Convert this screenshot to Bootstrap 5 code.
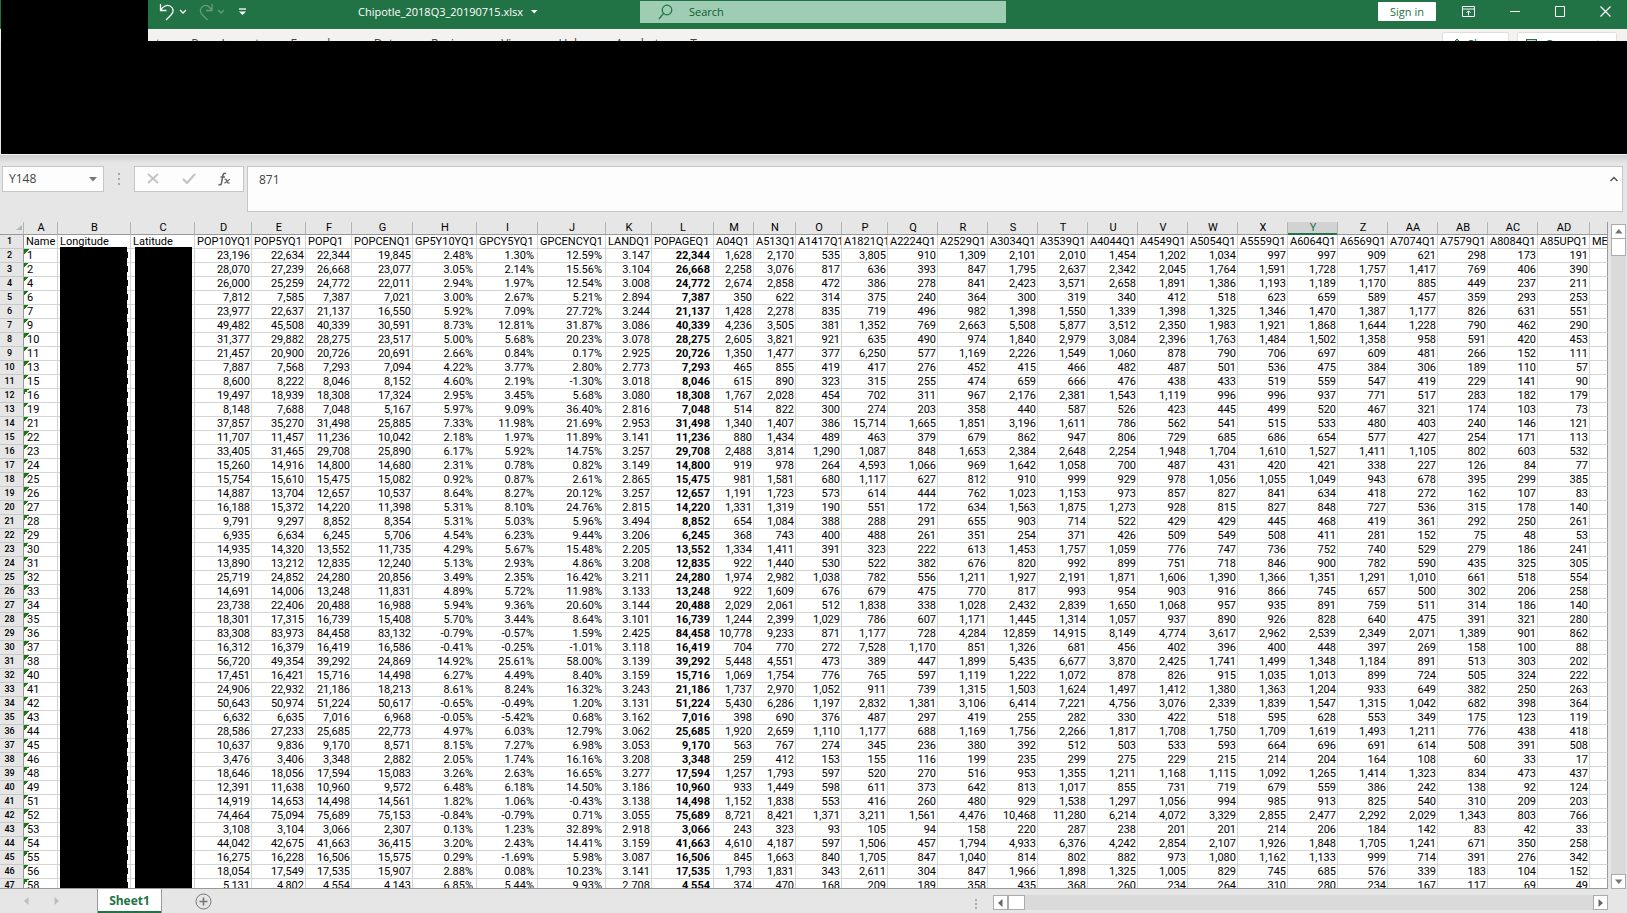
<!DOCTYPE html>
<html lang="en">
<head>
<meta charset="utf-8">
<meta name="viewport" content="width=device-width, initial-scale=1">
<title>Chipotle_2018Q3_20190715.xlsx</title>
<link href="https://cdn.jsdelivr.net/npm/bootstrap@5.3.0/dist/css/bootstrap.min.css" rel="stylesheet">
<style>
  :root { --xl-green:#217346; --chrome:#e6e6e6; --line:#d4d4d4; --edge:#999; }
  body { font-family:"Open Sans","Noto Sans",sans-serif; font-size:11px; line-height:16px; background:var(--chrome); color:#000; }
  button { font:inherit; color:inherit; background:none; border:0; padding:0; }
  input, textarea { font:inherit; color:inherit; border:0; padding:0; background:none; outline:0; resize:none; }
  svg { display:block; }
  .title-bar { height:29px; background:var(--xl-green); color:#fff; }
  .title-inner { height:23px; }
  .quick-tools { width:358px; padding-left:159px; }
  .dimmed { opacity:.3; }
  .file-name { width:282px; }
  .search-box { width:366px; height:22px; background:#9fcdb3; color:#0e5c2f; padding-left:18px; margin-top:1px; }
  .search-box input::placeholder { color:#0e5c2f; opacity:1; }
  .sign-in { background:#fff; color:var(--xl-green); width:58px; height:19px; border-radius:1px; }
  .window-tools { padding-right:16px; gap:35px; }
  .sign-in { margin-right:-9px; }
  .ribbon-tabs { height:12px; background:#f3f2f1; color:#444; font-size:12px; padding-left:128px; padding-right:10px; gap:31px; }
  .ribbon-tabs a { color:#444; line-height:30px; white-space:nowrap; }
  .ribbon-btn { background:#fff; border:1px solid #e1dfdd; border-radius:2px; height:26px; margin-top:3px; color:var(--xl-green); }
  .share-btn { width:67px; }
  .comments-btn { width:100px; }
  .ribbon-body { height:113px; margin-left:1px; background:#000; }
  .mask { background:#000; }
  .mask-corner { left:1px; top:0; width:147px; height:60px; }
  .formula-row { height:68px; padding:12px 4px 0 2px; background:linear-gradient(#f4f4f4 0 1px,#cdcdcd 1px,#e6e6e6 9px); font-size:12px; color:#444; }
  .field { background:#fdfdfd; border:1px solid #c6c6c6; }
  .name-box { width:102px; height:26px; padding:1px 6px 0; }
  .name-box input { width:70px; }
  .grip { width:30px; height:26px; }
  .edit-tools { width:110px; height:26px; padding:0 12px; margin-right:3px; }
  .value-box { height:46px; padding:5px 4px 0 11px; }
  .sheet { min-height:0; }
  .cells { border-bottom:1px solid var(--edge); min-width:0; }
  .grid { table-layout:fixed; width:100%; border-collapse:separate; border-spacing:0; font-family:Roboto,"Liberation Sans",sans-serif; font-size:11px; line-height:13px; background:#fff; }
  .grid td, .grid th { padding:0 1px 0 2px; border-right:1px solid var(--line); border-bottom:1px solid var(--line); overflow:hidden; white-space:nowrap; text-align:right; font-weight:400; height:14px; }
  .grid thead th { background:var(--chrome); text-align:center; line-height:12px; height:13px; border-right-color:#b4b4b4; border-bottom-color:var(--edge); }
  .grid thead th.picked { background:#d2d2d2; color:var(--xl-green); box-shadow:inset 0 -1px var(--xl-green); border-bottom-color:var(--xl-green); }
  .grid tbody th { background:var(--chrome); text-align:center; font-size:9px; font-weight:500; border-right-color:var(--edge); border-bottom-color:#c9c9c9; padding:0 4px 0 0; }
  .grid td.txt { text-align:left; padding-right:0; }
  .grid td.pct { padding-right:3px; }
  .grid td.strong { font-weight:700; padding-right:3px; }
  .grid td.flagged { padding-left:3px; background:linear-gradient(135deg,#107c10 50%,transparent 50%) 0 0/5px 5px no-repeat; }
  .grid th:last-child, .grid td:last-child { border-right-color:var(--edge); }
  .mask-b, .mask-c { top:25px; bottom:0; }
  .mask-b { left:60px; width:67px; }
  .mask-c { left:135px; width:57px; }
  .mask-b::after { content:""; position:absolute; left:100%; top:0; bottom:0; width:1px; background:repeating-linear-gradient(transparent 0 5px,#000 5px 11px,transparent 11px 14px); }
  .v-scroll { width:15px; margin:2px 1px 0 3px; background:#dadada; }
  .sq { width:15px; height:15px; background:#fff; border:1px solid #ababab; display:flex; align-items:center; justify-content:center; flex:none; }
  .thumb-v { height:18px; width:15px; margin-top:-1px; background:#fff; border:1px solid #ababab; }
  .thumb-h { width:17px; height:15px; background:#fff; border:1px solid #ababab; }
  .foot { height:24px; padding-right:19px; }
  .sheet-nav { width:97px; padding-left:24px; gap:25px; }
  .sheet-tab { width:65px; background:#fff; color:var(--xl-green); font-size:12px; font-weight:700; border:solid var(--edge); border-width:0 1px; box-shadow:inset 0 -2px var(--xl-green); }
  .add-sheet { margin-left:33px; }
  .h-scroll { width:40%; max-width:633px; height:15px; margin-top:6px; }
  .h-track { height:15px; background:#dadada; }
</style>
</head>
<body>
<div class="d-flex flex-column vh-100 overflow-hidden position-relative">
  <header class="title-bar">
    <div class="title-inner d-flex align-items-center">
      <div class="quick-tools d-flex align-items-center flex-shrink-0">
        <button aria-label="Undo"><svg width="28" height="18" viewBox="0 0 28 18" fill="none" stroke="#fff" stroke-width="1.3"><path d="M1.5 1v6.500h6M1.500 7.500C4 3 8 1.500 11 3c4 2 4 6 1 9l-5 5"/><path d="M21 7l3 3 3-3"/></svg></button>
        <button class="dimmed ms-2 ps-1" aria-label="Redo"><svg width="28" height="18" viewBox="0 0 28 18" fill="none" stroke="#fff" stroke-width="1.300"><path d="M13 1v6.500H7M13 7.500C10 3 7 1.500 4.500 3c-4 2-4 6-1 9l5 5"/><path d="M19 7l3 3 3-3"/></svg></button>
        <button class="ms-2 ps-1" aria-label="Customize toolbar"><svg width="8" height="8" viewBox="0 0 8 8"><path d="M0 1h7" stroke="#fff" stroke-width="1.300"/><path d="M0 3.500h7l-3.500 3.500z" fill="#fff"/></svg></button>
      </div>
      <div class="file-name d-flex align-items-center gap-2 flex-shrink-0">
        <span>Chipotle_2018Q3_20190715.xlsx</span>
        <svg width="7" height="4" viewBox="0 0 7 4"><path d="M0 0h6.500L3.300 3.500z" fill="#fff"/></svg>
      </div>
      <label class="search-box d-flex align-items-center">
        <svg width="15" height="16" viewBox="0 0 15 16" fill="none" stroke="#217346" stroke-width="1.200"><circle cx="9" cy="6" r="4.800"/><path d="M5.500 9.500L1 15"/></svg>
        <input class="ms-3 flex-grow-1" type="search" placeholder="Search" aria-label="Search">
      </label>
      <div class="window-tools ms-auto d-flex align-items-center">
        <button class="sign-in">Sign in</button>
        <button aria-label="Ribbon display options"><svg width="13" height="11" viewBox="0 0 13 11" fill="none" stroke="#fff"><path d="M.5.500h12v10H.500zM.500 3h12M6.500 9.500V5M4.500 6.800l2-2 2 2"/></svg></button>
        <button aria-label="Minimize"><svg width="10" height="11" viewBox="0 0 10 11"><path d="M0 5.500h10" stroke="#fff"/></svg></button>
        <button aria-label="Maximize"><svg width="10" height="11" viewBox="0 0 10 11"><path d="M.5.500h9v10H.500z" fill="none" stroke="#fff"/></svg></button>
        <button aria-label="Close"><svg width="11" height="11" viewBox="0 0 11 11"><path d="M.500.500l10 10M10.500.500l-10 10" stroke="#fff" stroke-width="1.200"/></svg></button>
      </div>
    </div>
  </header>

  <nav class="ribbon-tabs d-flex align-items-start overflow-hidden flex-shrink-0">
    <a class="text-decoration-none" href="#">Insert</a>
    <a class="text-decoration-none" href="#">Page Layout</a>
    <a class="text-decoration-none" href="#">Formulas</a>
    <a class="text-decoration-none" href="#">Data</a>
    <a class="text-decoration-none" href="#">Review</a>
    <a class="text-decoration-none" href="#">View</a>
    <a class="text-decoration-none" href="#">Help</a>
    <a class="text-decoration-none" href="#">Acrobat</a>
    <a class="text-decoration-none" href="#">Team</a>
    <div class="ms-auto d-flex gap-2">
      <button class="ribbon-btn share-btn d-flex align-items-center justify-content-center gap-1"><svg width="12" height="14" viewBox="0 0 12 14" fill="none" stroke="#217346"><path d="M6 10V1M3.500 3.500L6 1l2.500 2.500M1 7v6.500h10V7"/></svg>Share</button>
      <button class="ribbon-btn comments-btn d-flex align-items-center gap-2 px-2"><svg width="11" height="12" viewBox="0 0 11 12" fill="none" stroke="#217346" stroke-width="1.300"><path d="M.500.700h10v7H5l-2.500 2.500V7.700h-2z"/></svg>Comments</button>
    </div>
  </nav>
  <div class="ribbon-body flex-shrink-0"></div>
  <div class="mask mask-corner position-absolute"></div>

  <div class="formula-row d-flex align-items-start flex-shrink-0">
    <div class="field name-box d-flex align-items-center justify-content-between">
      <input type="text" value="Y148" aria-label="Name box">
      <button aria-label="Name list"><svg width="8" height="5" viewBox="0 0 8 5"><path d="M0 0h8L4 4.500z" fill="#777"/></svg></button>
    </div>
    <div class="grip d-flex align-items-center justify-content-center"><svg width="2" height="12" viewBox="0 0 2 12" fill="#a8a8a8"><path d="M0 0h2v2H0zM0 5h2v2H0zM0 10h2v2H0z"/></svg></div>
    <div class="field edit-tools d-flex align-items-center justify-content-between">
      <button aria-label="Cancel"><svg width="12" height="11" viewBox="0 0 12 11"><path d="M1 1l10 9M11 1L1 10" stroke="#c3c3c3" stroke-width="1.800"/></svg></button>
      <button aria-label="Enter"><svg width="14" height="11" viewBox="0 0 14 11"><path d="M1 6l4 4L13 1" fill="none" stroke="#c3c3c3" stroke-width="2.200"/></svg></button>
      <button aria-label="Insert function"><svg width="13" height="14" viewBox="0 0 13 14" fill="none" stroke="#666" stroke-width="1.200"><path d="M8 1.500C6 .5 5.200 2 4.800 4L3.500 11c-.3 1.800-1.300 2.300-3 1.500M2.500 5h4.500" stroke-width="1.500"/><path d="M6.500 7.500c1.500-.8 2 .2 2.500 1.800s1 2.300 2.700 1.500M12 7.300c-1.500 0-4 4-5.700 3.500"/></svg></button>
    </div>
    <div class="field value-box d-flex align-items-start flex-grow-1">
      <textarea class="flex-grow-1 h-100" rows="1" aria-label="Formula bar">871</textarea>
      <button class="pt-1" aria-label="Collapse formula bar"><svg width="8" height="6" viewBox="0 0 8 6"><path d="M.500 5L4 1.500 7.500 5" fill="none" stroke="#555" stroke-width="1.500"/></svg></button>
    </div>
  </div>

  <main class="sheet d-flex flex-grow-1">
    <div class="cells flex-grow-1 overflow-hidden position-relative">
      <table class="grid"><colgroup id="cols"></colgroup><thead><tr id="letters"></tr></thead><tbody id="rows"></tbody></table>
      <div class="mask mask-b position-absolute"></div>
      <div class="mask mask-c position-absolute"></div>
    </div>
    <div class="v-scroll d-flex flex-column">
      <button class="sq" aria-label="Scroll up"><svg width="8" height="5" viewBox="0 0 8 5"><path d="M0 4.500h7.500L3.800 0z" fill="#777"/></svg></button>
      <div class="thumb-v"></div>
      <button class="sq mt-auto" aria-label="Scroll down"><svg width="8" height="5" viewBox="0 0 8 5"><path d="M0 .5h7.500L3.800 5z" fill="#777"/></svg></button>
    </div>
  </main>

  <footer class="foot d-flex align-items-stretch flex-shrink-0">
    <div class="sheet-nav d-flex align-items-center">
      <button aria-label="Previous sheet"><svg width="5" height="8" viewBox="0 0 5 8"><path d="M4.500 0v8L0 4z" fill="#bdbdbd"/></svg></button>
      <button aria-label="Next sheet"><svg width="5" height="8" viewBox="0 0 5 8"><path d="M.500 0v8L5 4z" fill="#bdbdbd"/></svg></button>
    </div>
    <button class="sheet-tab">Sheet1</button>
    <button class="add-sheet" aria-label="New sheet"><svg width="17" height="17" viewBox="0 0 17 17" fill="none" stroke="#777"><circle cx="8.500" cy="8.500" r="7.500"/><path d="M4.500 8.500h8M8.500 4.500v8" stroke-width="1.600"/></svg></button>
    <div class="h-scroll d-flex ms-auto">
      <svg class="me-3 mt-1" width="2" height="10" viewBox="0 0 2 10" fill="#a8a8a8"><path d="M0 0h2v2H0zM0 4h2v2H0zM0 8h2v2H0z"/></svg>
      <button class="sq" aria-label="Scroll left"><svg width="5" height="8" viewBox="0 0 5 8"><path d="M4.500 0v8L0 4z" fill="#666"/></svg></button>
      <div class="thumb-h"></div>
      <div class="h-track flex-grow-1"></div>
      <button class="sq" aria-label="Scroll right"><svg width="5" height="8" viewBox="0 0 5 8"><path d="M.500 0v8L5 4z" fill="#666"/></svg></button>
    </div>
  </footer>
</div>

<script>
const widths = [24,34,73,64,57,54,46,61,64,61,68,46,62,40,42,46,46,50,50,50,50,50,50,50,50,50,50,50,50,50,52];
const letters = "A B C D E F G H I J K L M N O P Q R S T U V W X Y Z AA AB AC AD".split(" ");
const fields = "Name Longitude Latitude POP10YQ1 POP5YQ1 POPQ1 POPCENQ1 GP5Y10YQ1 GPCY5YQ1 GPCENCYQ1 LANDQ1 POPAGEQ1 A04Q1 A513Q1 A1417Q1 A1821Q1 A2224Q1 A2529Q1 A3034Q1 A3539Q1 A4044Q1 A4549Q1 A5054Q1 A5559Q1 A6064Q1 A6569Q1 A7074Q1 A7579Q1 A8084Q1 A85UPQ1 ME".split(" ");
// Name, D-K, M-AD; the population column F is repeated as L.
const data = `1 23196 22634 22344 19845 2.48 1.30 12.59 3.147 1628 2170 535 3805 910 1309 2101 2010 1454 1202 1034 997 997 909 621 298 173 191
2 28070 27239 26668 23077 3.05 2.14 15.56 3.104 2258 3076 817 636 393 847 1795 2637 2342 2045 1764 1591 1728 1757 1417 769 406 390
4 26000 25259 24772 22011 2.94 1.97 12.54 3.008 2674 2858 472 386 278 841 2423 3571 2658 1891 1386 1193 1189 1170 885 449 237 211
6 7812 7585 7387 7021 3.00 2.67 5.21 2.894 350 622 314 375 240 364 300 319 340 412 518 623 659 589 457 359 293 253
7 23977 22637 21137 16550 5.92 7.09 27.72 3.244 1428 2278 835 719 496 982 1398 1550 1339 1398 1325 1346 1470 1387 1177 826 631 551
9 49482 45508 40339 30591 8.73 12.81 31.87 3.086 4236 3505 381 1352 769 2663 5508 5877 3512 2350 1983 1921 1868 1644 1228 790 462 290
10 31377 29882 28275 23517 5.00 5.68 20.23 3.078 2605 3821 921 635 490 974 1840 2979 3084 2396 1763 1484 1502 1358 958 591 420 453
11 21457 20900 20726 20691 2.66 0.84 0.17 2.925 1350 1477 377 6250 577 1169 2226 1549 1060 878 790 706 697 609 481 266 152 111
13 7887 7568 7293 7094 4.22 3.77 2.80 2.773 465 855 419 417 276 452 415 466 482 487 501 536 475 384 306 189 110 57
15 8600 8222 8046 8152 4.60 2.19 -1.30 3.018 615 890 323 315 255 474 659 666 476 438 433 519 559 547 419 229 141 90
16 19497 18939 18308 17324 2.95 3.45 5.68 3.080 1767 2028 454 702 311 967 2176 2381 1543 1119 996 996 937 771 517 283 182 179
19 8148 7688 7048 5167 5.97 9.09 36.40 2.816 514 822 300 274 203 358 440 587 526 423 445 499 520 467 321 174 103 73
21 37857 35270 31498 25885 7.33 11.98 21.69 2.953 1340 1407 386 15714 1665 1851 3196 1611 786 562 541 515 533 480 403 240 146 121
22 11707 11457 11236 10042 2.18 1.97 11.89 3.141 880 1434 489 463 379 679 862 947 806 729 685 686 654 577 427 254 171 113
23 33405 31465 29708 25890 6.17 5.92 14.75 3.257 2488 3814 1290 1087 848 1653 2384 2648 2254 1948 1704 1610 1527 1411 1105 802 603 532
24 15260 14916 14800 14680 2.31 0.78 0.82 3.149 919 978 264 4593 1066 969 1642 1058 700 487 431 420 421 338 227 126 84 77
25 15754 15610 15475 15082 0.92 0.87 2.61 2.865 981 1581 680 1117 627 812 910 999 929 978 1056 1055 1049 943 678 395 299 385
26 14887 13704 12657 10537 8.64 8.27 20.12 3.257 1191 1723 573 614 444 762 1023 1153 973 857 827 841 634 418 272 162 107 83
27 16188 15372 14220 11398 5.31 8.10 24.76 2.815 1331 1319 190 551 172 634 1563 1875 1273 928 815 827 848 727 536 315 178 140
28 9791 9297 8852 8354 5.31 5.03 5.96 3.494 654 1084 388 288 291 655 903 714 522 429 429 445 468 419 361 292 250 261
29 6935 6634 6245 5706 4.54 6.23 9.44 3.206 368 743 400 488 261 351 254 371 426 509 549 508 411 281 152 75 48 53
30 14935 14320 13552 11735 4.29 5.67 15.48 2.205 1334 1411 391 323 222 613 1453 1757 1059 776 747 736 752 740 529 279 186 241
31 13890 13212 12835 12240 5.13 2.93 4.86 3.208 922 1440 530 522 382 676 820 992 899 751 718 846 900 782 590 435 325 305
32 25719 24852 24280 20856 3.49 2.35 16.42 3.211 1974 2982 1038 782 556 1211 1927 2191 1871 1606 1390 1366 1351 1291 1010 661 518 554
33 14691 14006 13248 11831 4.89 5.72 11.98 3.133 922 1609 676 679 475 770 817 993 954 903 916 866 745 657 500 302 206 258
34 23738 22406 20488 16988 5.94 9.36 20.60 3.144 2029 2061 512 1838 338 1028 2432 2839 1650 1068 957 935 891 759 511 314 186 140
35 18301 17315 16739 15408 5.70 3.44 8.64 3.101 1244 2399 1029 786 607 1171 1445 1314 1057 937 890 926 828 640 475 391 321 280
36 83308 83973 84458 83132 -0.79 -0.57 1.59 2.425 10778 9233 871 1177 728 4284 12859 14915 8149 4774 3617 2962 2539 2349 2071 1389 901 862
37 16312 16379 16419 16586 -0.41 -0.25 -1.01 3.118 704 770 272 7528 1170 851 1326 681 456 402 396 400 448 397 269 158 100 88
38 56720 49354 39292 24869 14.92 25.61 58.00 3.139 5448 4551 473 389 447 1899 5435 6677 3870 2425 1741 1499 1348 1184 891 513 303 202
40 17451 16421 15716 14498 6.27 4.49 8.40 3.159 1069 1754 776 765 597 1119 1222 1072 878 826 915 1035 1013 899 724 505 324 222
41 24906 22932 21186 18213 8.61 8.24 16.32 3.243 1737 2970 1052 911 739 1315 1503 1624 1497 1412 1380 1363 1204 933 649 382 250 263
42 50643 50974 51224 50617 -0.65 -0.49 1.20 3.131 5430 6286 1197 2832 1381 3106 6414 7221 4756 3076 2339 1839 1547 1315 1042 682 398 364
43 6632 6635 7016 6968 -0.05 -5.42 0.68 3.162 398 690 376 487 297 419 255 282 330 422 518 595 628 553 349 175 123 119
44 28586 27233 25685 22773 4.97 6.03 12.79 3.062 1920 2659 1110 1177 688 1169 1756 2266 1817 1708 1750 1709 1619 1493 1211 776 438 418
45 10637 9836 9170 8571 8.15 7.27 6.98 3.053 563 767 274 345 236 380 392 512 503 533 593 664 696 691 614 508 391 508
46 3476 3406 3348 2882 2.05 1.74 16.16 3.208 259 412 153 155 116 199 235 299 275 229 215 214 204 164 108 60 33 17
48 18646 18056 17594 15083 3.26 2.63 16.65 3.277 1257 1793 597 520 270 516 953 1355 1211 1168 1115 1092 1265 1414 1323 834 473 437
49 12391 11638 10960 9572 6.48 6.18 14.50 3.186 933 1449 598 611 373 642 813 1017 855 731 719 679 559 386 242 138 92 124
51 14919 14653 14498 14561 1.82 1.06 -0.43 3.138 1152 1838 553 416 260 480 929 1538 1297 1056 994 985 913 825 540 310 209 203
52 74464 75094 75689 75153 -0.84 -0.79 0.71 3.055 8721 8421 1371 3211 1561 4476 10468 11280 6214 4072 3329 2855 2477 2292 2029 1343 803 766
53 3108 3104 3066 2307 0.13 1.23 32.89 2.918 243 323 93 105 94 158 220 287 238 201 201 214 206 184 142 83 42 33
54 44042 42675 41663 36415 3.20 2.43 14.41 3.159 4610 4187 597 1506 457 1794 4933 6376 4242 2854 2107 1926 1848 1705 1241 671 350 258
55 16275 16228 16506 15575 0.29 -1.69 5.98 3.087 845 1663 840 1705 847 1040 814 802 882 973 1080 1162 1133 999 714 391 276 342
56 18054 17549 17535 15907 2.88 0.08 10.23 3.141 1793 1831 343 2611 304 847 1966 1898 1325 1005 829 745 685 576 339 183 104 152
58 5131 4802 4554 4143 6.85 5.44 9.93 2.708 374 470 168 209 189 358 435 368 260 234 264 310 280 234 167 117 69 49`;

const comma = v => v.includes(".") ? v : v.replace(/\B(?=(\d{3})+$)/g, ",");
document.getElementById("cols").innerHTML = widths.map(w => `<col style="width:${w}px">`).join("") + "<col>";
document.getElementById("letters").innerHTML =
  `<th scope="col"><svg class="ms-auto" width="6" height="5" viewBox="0 0 6 5"><path d="M6 0v5H0z" fill="#b4b4b4"/></svg></th>` +
  letters.map(l => `<th scope="col"${l === "Y" ? ' class="picked"' : ""}>${l}</th>`).join("") + "<th></th>";
let html = `<tr><th scope="row">1</th>${fields.map(f => `<td class="txt">${f}</td>`).join("")}</tr>`;
data.split("\n").forEach((line, i) => {
  const v = line.split(" ");
  const cells = v.slice(1).map((x, k) => k >= 4 && k <= 6 ? `<td class="pct">${x}%</td>` : `<td>${comma(x)}</td>`);
  cells.splice(8, 0, `<td class="strong">${comma(v[3])}</td>`);
  html += `<tr><th scope="row">${i + 2}</th><td class="txt flagged">${v[0]}</td><td></td><td></td>${cells.join("")}<td></td></tr>`;
});
document.getElementById("rows").innerHTML = html;
</script>
<script src="https://cdn.jsdelivr.net/npm/bootstrap@5.3.0/dist/js/bootstrap.bundle.min.js"></script>
</body>
</html>
